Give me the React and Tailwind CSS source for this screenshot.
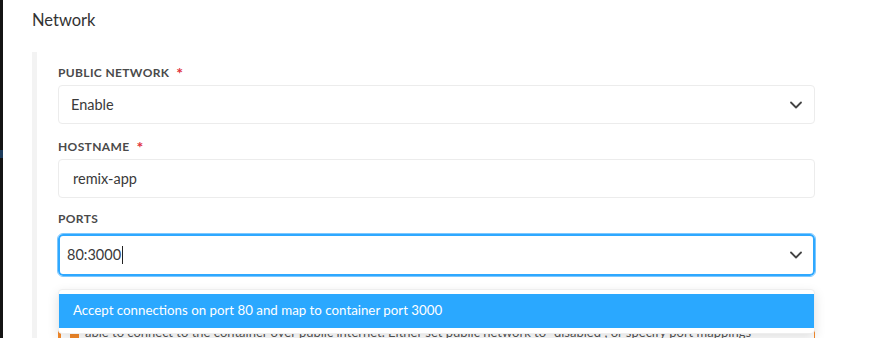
import React from 'react';
import { ChevronDown } from 'lucide-react';

const font = { fontFamily: 'Lato, "Open Sans", sans-serif' };

const Label = ({ children, required }) => (
  <div className="h-4 mb-[4px] flex items-center text-[12px] font-bold tracking-[0.03em] uppercase text-[#4a4a4a]">
    {children}
    {required && <span className="ml-[7px] text-[#e0323c] text-[16px] leading-none">*</span>}
  </div>
);

const App = () => {
  return (
    <div className="h-[338px] overflow-hidden bg-white flex text-[#333]" style={font}>
      {/* dark edge of the window behind */}
      <div className="w-[3px] bg-[#141414] flex flex-col">
        <div className="h-[150px]" />
        <div className="h-[8px] bg-[#1c3a5a]" />
      </div>

      <div className="flex-1 pl-[29px] pr-[70px]">
        <h2 className="pt-[9px] text-[16.5px] leading-[22px] text-[#333]">Network</h2>

        <div className="mt-[21px] border-l-[5px] border-[#f3f3f3] pl-[21px] pt-[13px] pb-10">
          {/* Public network */}
          <Label required>Public network</Label>
          <div className="h-[39px] rounded border border-[#ececec] flex items-center justify-between pl-[12px] pr-[8px] text-[14.5px] text-[#3a3a3a]">
            <span>Enable</span>
            <ChevronDown size={20} strokeWidth={2.2} className="text-[#444]" />
          </div>

          {/* Hostname */}
          <div className="mt-[15px]">
            <Label required>Hostname</Label>
            <div className="h-[39px] rounded border border-[#ececec] flex items-center pl-[14px] text-[14.5px] text-[#3a3a3a]">
              remix-app
            </div>
          </div>

          {/* Ports */}
          <div className="mt-[13px]">
            <Label>Ports</Label>
            <div className="mt-[7px] h-[42px] rounded-[5px] border-2 border-[#2ea8ff] outline outline-1 outline-[#7cc8ff] flex items-center justify-between pl-[7px] pr-[7px] text-[14.5px] text-[#3a3a3a]">
              <span className="flex items-center">
                80:3000
                <span className="ml-[1px] w-px h-[18px] bg-[#222]" />
              </span>
              <ChevronDown size={20} strokeWidth={2.2} className="text-[#444]" />
            </div>
          </div>

          {/* Warning, partly under the dropdown */}
          <div className="relative mt-[16px]">
            <div className="border border-[#f58a2a] border-l-[3px] rounded-[3px] pl-[9px] pr-3 pt-[6px] pb-2 text-[13px] leading-[18px] text-[#555]">
              <div className="font-bold">Port mappings are missing</div>
              <div className="flex items-start gap-[6px] mt-[6px]">
                <span className="mt-[6px] w-[9px] h-[9px] bg-[#f58a2a] shrink-0" />
                <span>
                  able to connect to the container over public internet. Either set public network to "disabled", or specify port mappings
                </span>
              </div>
            </div>

            {/* dropdown menu */}
            <div className="absolute -top-[3px] left-0 right-0 bg-white rounded-[4px] border border-[#eeeeee] shadow-[0_4px_12px_rgba(0,0,0,0.12)] pt-[4px] pb-[5px]">
              <div className="h-[34px] bg-[#2aa8ff] flex items-center pl-[14px] text-[13.3px] text-white">
                Accept connections on port 80 and map to container port 3000
              </div>
            </div>
          </div>
        </div>
      </div>
    </div>
  );
};

export default App;
